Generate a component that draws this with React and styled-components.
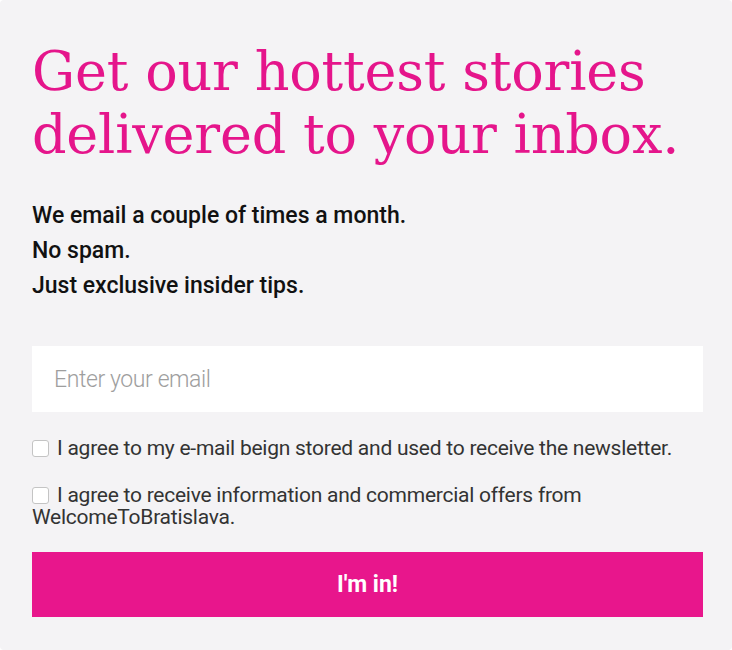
import React from 'react';
import styled, { createGlobalStyle } from 'styled-components';

const GlobalStyle = createGlobalStyle`
  html, body {
    margin: 0;
    padding: 0;
    background: #ffffff;
  }
  * {
    box-sizing: border-box;
  }
`;

const App = () => {
  return (
    <>
      <GlobalStyle />
      <Card>
        <Title>Get our hottest stories delivered to your inbox.</Title>
        <Lead>
          <p>We email a couple of times a month.</p>
          <p>No spam.</p>
          <p>Just exclusive insider tips.</p>
        </Lead>
        <Form onSubmit={(e) => e.preventDefault()}>
          <EmailInput type="email" placeholder="Enter your email" />
          <Consent>
            <Check type="checkbox" />
            I agree to my e-mail beign stored and used to receive the newsletter.
          </Consent>
          <Consent>
            <Check type="checkbox" />
            I agree to receive information and commercial offers from WelcomeToBratislava.
          </Consent>
          <Submit type="submit">I'm in!</Submit>
        </Form>
      </Card>
    </>
  );
};

const Card = styled.div`
  width: 732px;
  height: 650px;
  background: #f4f3f5;
  border-radius: 4px;
  padding: 40px 29px 0 32px;
  overflow: hidden;
`;

const Title = styled.h1`
  margin: 0;
  font-family: "DejaVu Serif", serif;
  font-weight: 400;
  font-size: 54px;
  line-height: 63px;
  color: #e5158b;
  letter-spacing: -0.2px;
`;

const Lead = styled.div`
  margin-top: 32px;
  font-family: Roboto, "Noto Sans", sans-serif;
  font-weight: 500;
  font-size: 23px;
  line-height: 35px;
  color: #111111;

  p {
    margin: 0;
  }
`;

const Form = styled.form`
  margin-top: 43px;
  display: flex;
  flex-direction: column;
`;

const EmailInput = styled.input`
  height: 66px;
  width: 100%;
  border: none;
  outline: none;
  background: #ffffff;
  padding: 0 22px;
  font-family: Roboto, "Noto Sans", sans-serif;
  font-weight: 300;
  font-size: 23px;
  color: #333333;
  letter-spacing: -0.4px;

  &::placeholder {
    color: #9e9e9e;
  }
`;

const Consent = styled.label`
  display: block;
  margin-top: 25px;
  font-family: Roboto, "Noto Sans", sans-serif;
  font-size: 21px;
  line-height: 22px;
  color: #333333;
  letter-spacing: -0.25px;

  & + & {
    margin-top: 25px;
  }
`;

const Check = styled.input`
  appearance: none;
  width: 17px;
  height: 17px;
  margin: 0 8px 0 0;
  vertical-align: -2px;
  border: 1px solid #c4c4c4;
  border-radius: 3px;
  background: #ffffff;
`;

const Submit = styled.button`
  margin-top: 24px;
  height: 65px;
  width: 100%;
  border: none;
  background: #e8168c;
  color: #ffffff;
  font-family: Roboto, "Noto Sans", sans-serif;
  font-weight: 700;
  font-size: 23px;
  cursor: pointer;
`;

export default App;
